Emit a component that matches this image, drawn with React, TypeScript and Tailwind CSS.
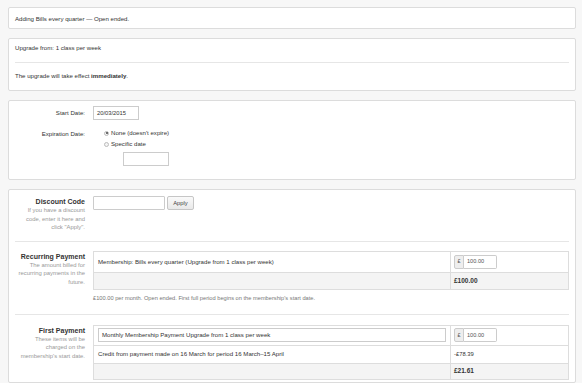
import React from "react";

const panel = "bg-white border border-[#dcdcdc] rounded-[2px]";

function Label({ title, lines }: { title: string; lines: string[] }) {
  return (
    <div className="w-[70px] shrink-0 text-right">
      <div className="text-[7px] font-bold leading-[9px] mt-[1px] text-[#333]">{title}</div>
      <div className="text-[5.9px] leading-[8.5px] text-[#999]">
        {lines.map((l) => (
          <div key={l}>{l}</div>
        ))}
      </div>
    </div>
  );
}

function MoneyInput({ value }: { value: string }) {
  return (
    <div className="flex h-[14px] ml-[-1px]">
      <span className="w-[10px] h-full flex items-center justify-center bg-[#eee] border border-[#ccc] rounded-l-[2px] text-[5.6px] text-[#555]">£</span>
      <span className="w-[33px] h-full flex items-center px-[3px] border border-l-0 border-[#ccc] rounded-r-[2px] text-[5.6px] text-[#555] bg-white">{value}</span>
    </div>
  );
}

function Radio({ checked, label }: { checked?: boolean; label: string }) {
  return (
    <div className="flex items-center gap-[2px] leading-[8px] ml-[11px]">
      <span className="w-[5px] h-[5px] rounded-full border border-[#bbb] bg-[#f4f4f4] flex items-center justify-center">
        {checked && <span className="w-[2px] h-[2px] rounded-full bg-[#444]" />}
      </span>
      <span>{label}</span>
    </div>
  );
}

export default function App() {
  return (
    <div className="h-[383px] overflow-hidden bg-[#f7f7f7] pl-[8px] pr-[6px] pt-[7px] flex flex-col gap-[9px] text-[#333] text-[6.1px] font-['Liberation_Sans',Arial,sans-serif]">
      {/* summary */}
      <div className={`${panel} h-[22px] px-[6px] pt-[1px] flex items-center`}>
        Adding Bills every quarter — Open ended.
      </div>

      {/* upgrade info */}
      <div className={`${panel} px-[6px] pt-[5px] pb-[10px] leading-[8px]`}>
        <div>Upgrade from: 1 class per week</div>
        <div className="mt-[10px] border-t border-[#e6e6e6] pt-[9px]">
          The upgrade will take effect <b>immediately</b>.
        </div>
      </div>

      {/* dates */}
      <div className={`${panel} px-[6px] pt-[5px] pb-[13px]`}>
        <div className="flex gap-[8px]">
          <div className="w-[70px] text-right leading-[14px]">Start Date:</div>
          <div className="w-[46px] h-[14px] border border-[#ccc] flex items-center px-[3px] text-[5.8px]">20/03/2015</div>
        </div>
        <div className="flex gap-[8px] mt-[9px]">
          <div className="w-[70px] text-right leading-[8px] mt-[1px]">Expiration Date:</div>
          <div>
            <Radio checked label="None (doesn't expire)" />
            <div className="mt-[3px]">
              <Radio label="Specific date" />
            </div>
            <div className="ml-[30px] mt-[4px] w-[46px] h-[14px] border border-[#ccc]" />
          </div>
        </div>
      </div>

      {/* payments */}
      <div className={`${panel} px-[6px] pt-[6px] flex-1`}>
        <div className="flex gap-[8px]">
          <Label title="Discount Code" lines={["If you have a discount", "code, enter it here and", 'click "Apply".']} />
          <div className="flex gap-[2px]">
            <div className="w-[72px] h-[14px] border border-[#ccc] rounded-[1px]" />
            <button className="w-[27px] h-[14px] border border-[#c6c6c6] rounded-[2px] bg-gradient-to-b from-[#fafafa] to-[#e9e9e9] text-[5.8px] text-[#444]">
              Apply
            </button>
          </div>
        </div>

        <div className="mt-[9px] border-t border-[#e6e6e6]" />

        <div className="flex gap-[8px] mt-[9px]">
          <Label title="Recurring Payment" lines={["The amount billed for", "recurring payments in the", "future."]} />
          <div className="flex-1">
            <table className="w-full border-collapse border border-[#ddd]">
              <tbody>
                <tr className="h-[21px]">
                  <td className="border border-[#ddd] px-[4px]">Membership: Bills every quarter (Upgrade from 1 class per week)</td>
                  <td className="border border-[#ddd] px-[4px] w-[118px]">
                    <MoneyInput value="100.00" />
                  </td>
                </tr>
                <tr className="h-[17px] bg-[#f4f4f4]">
                  <td className="border border-[#ddd]" />
                  <td className="border border-[#ddd] px-[3px] font-bold text-[6.5px]">£100.00</td>
                </tr>
              </tbody>
            </table>
            <div className="mt-[4px] leading-[8px] text-[5.7px] text-[#777]">
              £100.00 per month. Open ended. First full period begins on the membership's start date.
            </div>
          </div>
        </div>

        <div className="mt-[12px] border-t border-[#e6e6e6]" />

        <div className="flex gap-[8px] mt-[10px]">
          <Label title="First Payment" lines={["These items will be", "charged on the", "membership's start date."]} />
          <div className="flex-1">
            <table className="w-full border-collapse border border-[#ddd]">
              <tbody>
                <tr className="h-[20px]">
                  <td className="border border-[#ddd] px-[4px]">
                    <div className="h-[14px] border border-[#ccc] flex items-center px-[3px]">
                      Monthly Membership Payment Upgrade from 1 class per week
                    </div>
                  </td>
                  <td className="border border-[#ddd] px-[4px] w-[118px]">
                    <MoneyInput value="100.00" />
                  </td>
                </tr>
                <tr className="h-[18px]">
                  <td className="border border-[#ddd] px-[4px]">Credit from payment made on 16 March for period 16 March–15 April</td>
                  <td className="border border-[#ddd] px-[3px] text-[5.8px]">-£78.39</td>
                </tr>
                <tr className="h-[16px] bg-[#f4f4f4]">
                  <td className="border border-[#ddd]" />
                  <td className="border border-[#ddd] px-[3px] font-bold text-[6.5px]">£21.61</td>
                </tr>
              </tbody>
            </table>
          </div>
        </div>
      </div>
    </div>
  );
}
